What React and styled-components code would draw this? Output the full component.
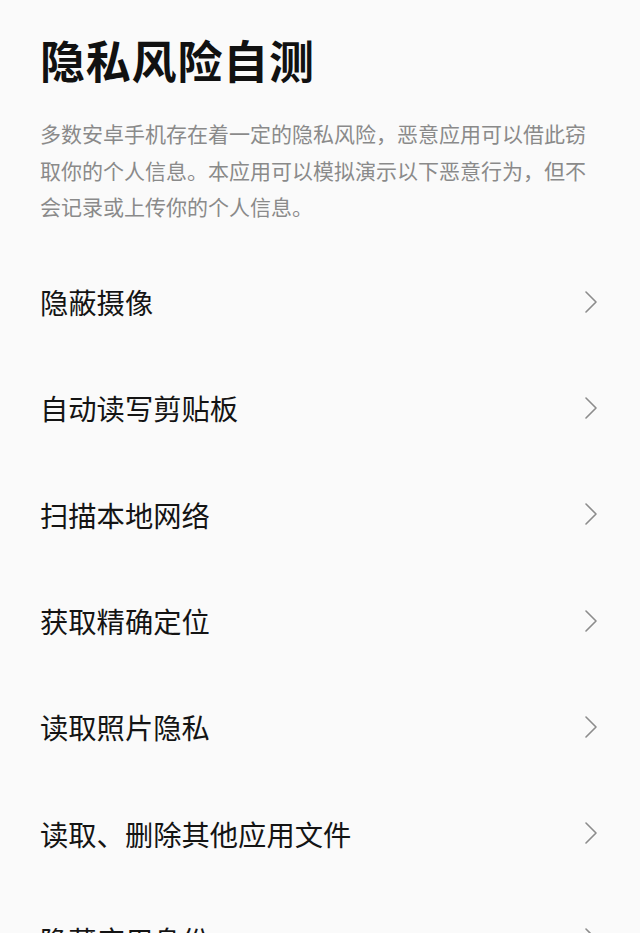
import React from 'react';
import styled, { createGlobalStyle } from 'styled-components';

const GlobalStyle = createGlobalStyle`
  body {
    margin: 0;
    background: #fafafa;
    font-family: "Noto Sans CJK SC", "Noto Sans", sans-serif;
  }
`;

const Page = styled.div`
  padding: 33px 40px 0 40px;
  height: 933px;
  overflow: hidden;
  box-sizing: border-box;
`;

const Title = styled.h1`
  margin: 0;
  font-size: 45px;
  line-height: 54px;
  font-weight: 700;
  color: #111;
  letter-spacing: 0.8px;
`;

const Intro = styled.p`
  margin: 28px 0 0 0;
  font-size: 21px;
  line-height: 36.5px;
  color: #8a8a8a;
  padding-right: 6px;
`;

const List = styled.ul`
  list-style: none;
  margin: 24px 0 0 0;
  padding: 0;
`;

const Row = styled.li`
  height: 106.3px;
  display: flex;
  align-items: center;
  justify-content: space-between;
  padding-right: 2px;
`;

const Label = styled.span`
  font-size: 28.3px;
  color: #141414;
`;

const Chevron = () => (
  <svg width="14" height="22" viewBox="0 0 14 22" fill="none">
    <polyline points="2,1 12,11 2,21" stroke="#8c8c8c" strokeWidth="1.6" strokeLinejoin="round" strokeLinecap="round" />
  </svg>
);

const items = [
  '隐蔽摄像',
  '自动读写剪贴板',
  '扫描本地网络',
  '获取精确定位',
  '读取照片隐私',
  '读取、删除其他应用文件',
  '隐藏应用身份',
];

export default function App() {
  return (
    <Page>
      <GlobalStyle />
      <Title>隐私风险自测</Title>
      <Intro>
        多数安卓手机存在着一定的隐私风险，恶意应用可以借此窃取你的个人信息。本应用可以模拟演示以下恶意行为，但不会记录或上传你的个人信息。
      </Intro>
      <List>
        {items.map((item) => (
          <Row key={item}>
            <Label>{item}</Label>
            <Chevron />
          </Row>
        ))}
      </List>
    </Page>
  );
}
